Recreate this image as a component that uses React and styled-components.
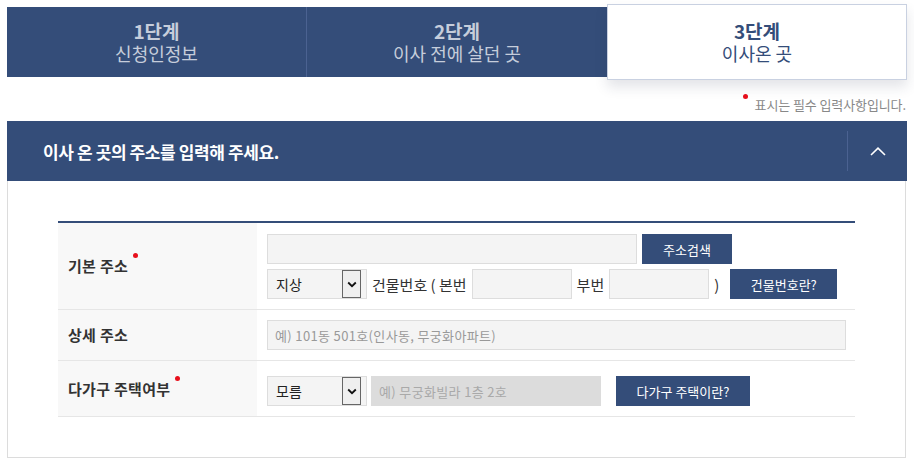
import React from "react";
import styled, { createGlobalStyle } from "styled-components";

const NAVY = "#344d79";
const FONT = `"Noto Sans CJK KR", "Noto Sans", sans-serif`;

const Global = createGlobalStyle`
  html, body { margin: 0; padding: 0; background: #fff; }
  body { font-family: ${FONT}; color: #333; }
  * { box-sizing: border-box; }
`;

const Page = styled.div`
  width: 900px;
  margin: 7px 7px 0 7px;
`;

const Steps = styled.nav`
  display: grid;
  grid-template-columns: repeat(3, 1fr);
  height: 70px;
  background: ${NAVY};
`;

const Step = styled.div`
  display: flex;
  flex-direction: column;
  align-items: center;
  justify-content: center;
  color: ${(p) => (p.$active ? NAVY : "#c6cddb")};
  background: ${(p) => (p.$active ? "#fff" : "transparent")};
  border-right: ${(p) => (p.$divider ? "1px solid #4b6291" : "none")};
  ${(p) =>
    p.$active &&
    `
    margin: -3px 0 -3px 0;
    border: 1px solid #c9d1e1;
    box-shadow: 0 7px 12px rgba(40, 50, 80, 0.13);
    position: relative;
    z-index: 1;
  `}
`;

const StepNo = styled.strong`
  display: block;
  height: 22px;
  font-size: 19px;
  line-height: 22px;
  font-weight: 700;
`;

const StepName = styled.span`
  display: block;
  height: 22px;
  font-size: 18px;
  line-height: 22px;
  font-weight: 400;
`;

const Note = styled.p`
  margin: 0;
  padding: 20px 1px 8px 0;
  text-align: right;
  font-size: 13px;
  line-height: 16px;
  letter-spacing: -0.1px;
  color: #888;
`;

const Dot = styled.span`
  display: inline-block;
  width: 5px;
  height: 5px;
  border-radius: 50%;
  background: #e8101c;
  vertical-align: top;
  margin: ${(p) => p.$m || "-3px 4px 0 0"};
`;

const Header = styled.div`
  display: flex;
  align-items: center;
  height: 60px;
  background: ${NAVY};
`;

const Title = styled.h2`
  flex: 1;
  margin: 0;
  padding-left: 36px;
  font-size: 17px;
  font-weight: 700;
  letter-spacing: -0.4px;
  color: #fff;
`;

const Toggle = styled.button`
  display: flex;
  align-items: center;
  justify-content: center;
  width: 60px;
  height: 40px;
  padding: 0;
  border: none;
  border-left: 1px solid #4b6291;
  background: transparent;
  cursor: pointer;
`;

const Panel = styled.div`
  border: 1px solid #dcdcdc;
  border-top: none;
  padding: 40px 50px 40px 50px;
  width: 899px;
`;

const Table = styled.div`
  border-top: 2px solid ${NAVY};
`;

const Row = styled.div`
  display: grid;
  grid-template-columns: 199px 1fr;
  border-bottom: 1px solid #e6e6e6;
`;

const Label = styled.div`
  display: flex;
  align-items: center;
  padding-left: 10px;
  background: #f8f8f8;
  font-size: 15px;
  font-weight: 700;
  letter-spacing: 0.3px;
  color: #333;
`;

const LabelText = styled.span`
  display: inline-flex;
  align-items: flex-start;
  line-height: 20px;
`;

const Cell = styled.div`
  display: flex;
  flex-direction: column;
  gap: 5px;
  padding: ${(p) => p.$pad || "10px 10px 10px 10px"};
`;

const Line = styled.div`
  display: flex;
  align-items: center;
  gap: ${(p) => p.$gap || "5px"};
`;

const Input = styled.input`
  width: ${(p) => p.$w}px;
  height: 30px;
  padding: 0 7px;
  border: 1px solid ${(p) => (p.disabled ? "#dcdcdc" : "#dddddd")};
  background: ${(p) => (p.disabled ? "#dcdcdc" : "#f4f4f4")};
  font-family: ${FONT};
  font-size: 13px;
  letter-spacing: 0.35px;
  color: #333;
  outline: none;
  &::placeholder {
    color: ${(p) => (p.disabled ? "#a9a9a9" : "#999")};
  }
`;

const Button = styled.button`
  width: ${(p) => p.$w}px;
  height: 30px;
  margin-left: ${(p) => p.$ml || 0}px;
  padding: 0;
  border: none;
  background: ${NAVY};
  color: #fff;
  font-family: ${FONT};
  font-size: 13px;
  cursor: pointer;
`;

const SelectBox = styled.div`
  display: flex;
  align-items: center;
  width: 100px;
  height: 30px;
  padding: 0 5px 0 0;
  border: 1px solid #dddddd;
  background: #f4f4f4;
`;

const Select = styled.select`
  flex: 1;
  min-width: 0;
  height: 100%;
  padding: 0 0 0 8px;
  border: none;
  background: transparent;
  appearance: none;
  font-family: ${FONT};
  font-size: 14px;
  color: #222;
  outline: none;
`;

const Arrow = styled.span`
  display: flex;
  align-items: center;
  justify-content: center;
  width: 19px;
  height: 28px;
  border: 1px solid #666;
  background: #efefef;
`;

const Text = styled.span`
  font-size: 15px;
  color: #333;
  white-space: pre;
`;

const Chevron = () => (
  <svg width="10" height="7" viewBox="0 0 10 7">
    <path d="M1.2 1.5 L5 5.2 L8.8 1.5" fill="none" stroke="#111" strokeWidth="1.8" />
  </svg>
);

const SelectField = ({ value }) => (
  <SelectBox>
    <Select defaultValue={value}>
      <option>{value}</option>
    </Select>
    <Arrow>
      <Chevron />
    </Arrow>
  </SelectBox>
);

export default function App() {
  return (
    <>
      <Global />
      <Page>
        <Steps>
          <Step $divider>
            <StepNo>1단계</StepNo>
            <StepName>신청인정보</StepName>
          </Step>
          <Step>
            <StepNo>2단계</StepNo>
            <StepName>이사 전에 살던 곳</StepName>
          </Step>
          <Step $active>
            <StepNo>3단계</StepNo>
            <StepName>이사온 곳</StepName>
          </Step>
        </Steps>
        <Note>
          <Dot /> 표시는 필수 입력사항입니다.
        </Note>
        <Header>
          <Title>이사 온 곳의 주소를 입력해 주세요.</Title>
          <Toggle aria-label="접기">
            <svg width="16" height="9" viewBox="0 0 16 9">
              <path d="M1 8 L8 1.2 L15 8" fill="none" stroke="#fff" strokeWidth="1.6" />
            </svg>
          </Toggle>
        </Header>
        <Panel>
          <Table>
            <Row>
              <Label>
                <LabelText>
                  기본 주소
                  <Dot $m="-3px 0 0 5px" />
                </LabelText>
              </Label>
              <Cell $pad="11px 10px 10px 10px">
                <Line>
                  <Input $w={370} />
                  <Button $w={90}>주소검색</Button>
                </Line>
                <Line>
                  <SelectField value="지상" />
                  <Text>건물번호 ( 본번</Text>
                  <Input $w={100} />
                  <Text>부번</Text>
                  <Input $w={100} />
                  <Text>)</Text>
                  <Button $w={107} $ml={6}>
                    건물번호란?
                  </Button>
                </Line>
              </Cell>
            </Row>
            <Row>
              <Label>
                <LabelText>상세 주소</LabelText>
              </Label>
              <Cell>
                <Line>
                  <Input $w={579} placeholder="예) 101동 501호(인사동, 무궁화아파트)" />
                </Line>
              </Cell>
            </Row>
            <Row>
              <Label>
                <LabelText>
                  다가구 주택여부
                  <Dot $m="-3px 0 0 5px" />
                </LabelText>
              </Label>
              <Cell $pad="15px 10px 10px 10px">
                <Line $gap="4px">
                  <SelectField value="모름" />
                  <Input $w={230} disabled placeholder="예) 무궁화빌라 1층 2호" />
                  <Button $w={134} $ml={11}>
                    다가구 주택이란?
                  </Button>
                </Line>
              </Cell>
            </Row>
          </Table>
        </Panel>
      </Page>
    </>
  );
}
